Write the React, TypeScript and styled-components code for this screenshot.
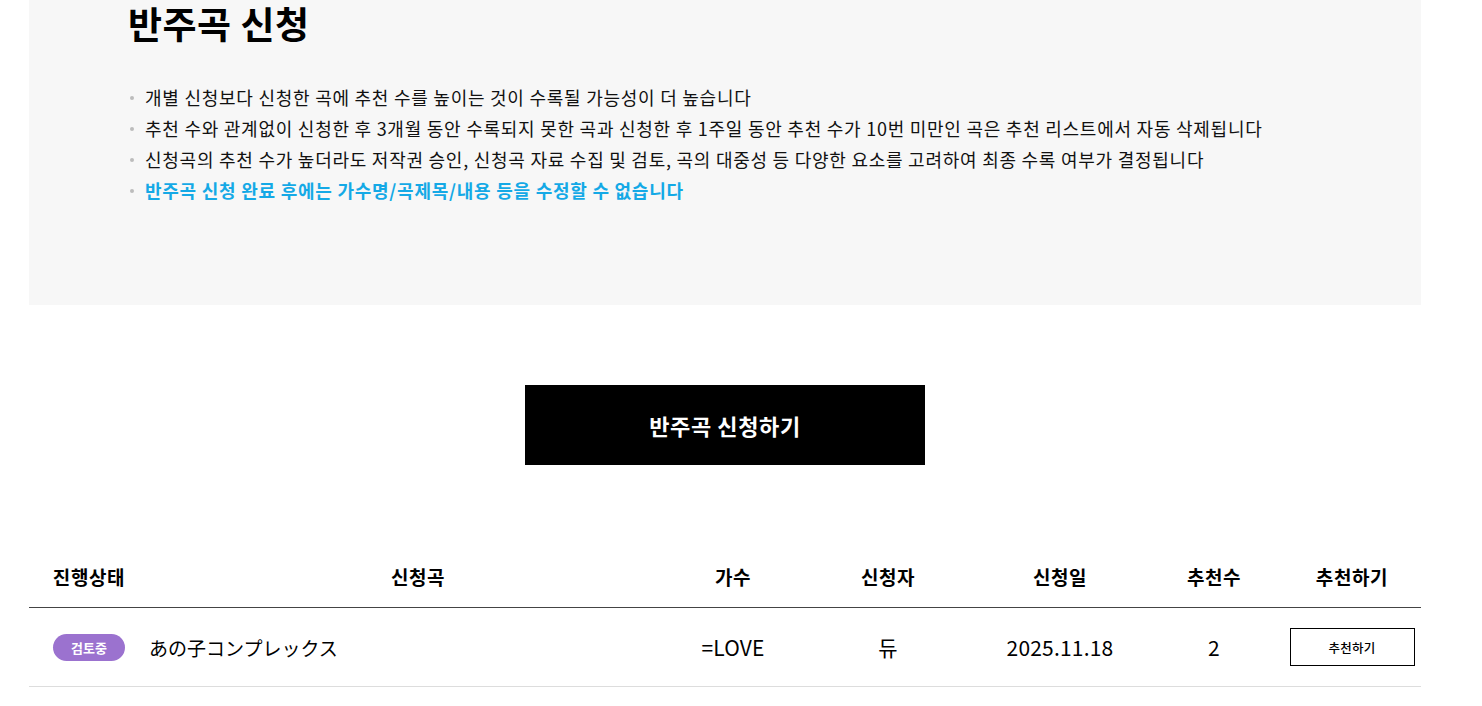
import styled, { createGlobalStyle } from "styled-components";

const GlobalStyle = createGlobalStyle`
  body {
    margin: 0;
    background: #fff;
    font-family: "Noto Sans CJK KR", "Noto Sans", sans-serif;
    color: #000;
  }
`;

const notices = [
  { text: "개별 신청보다 신청한 곡에 추천 수를 높이는 것이 수록될 가능성이 더 높습니다" },
  { text: "추천 수와 관계없이 신청한 후 3개월 동안 수록되지 못한 곡과 신청한 후 1주일 동안 추천 수가 10번 미만인 곡은 추천 리스트에서 자동 삭제됩니다" },
  { text: "신청곡의 추천 수가 높더라도 저작권 승인, 신청곡 자료 수집 및 검토, 곡의 대중성 등 다양한 요소를 고려하여 최종 수록 여부가 결정됩니다" },
  { text: "반주곡 신청 완료 후에는 가수명/곡제목/내용 등을 수정할 수 없습니다", highlight: true },
];

const requests = [
  { status: "검토중", title: "あの子コンプレックス", artist: "=LOVE", user: "듀", date: "2025.11.18", votes: 2 },
];

export default function App() {
  return (
    <>
      <GlobalStyle />
      <Page>
        <InfoPanel>
          <Title>반주곡 신청</Title>
          <NoticeList>
            {notices.map((n, i) => (
              <Notice key={i} $highlight={n.highlight}>{n.text}</Notice>
            ))}
          </NoticeList>
        </InfoPanel>

        <ButtonRow>
          <ApplyButton>반주곡 신청하기</ApplyButton>
        </ButtonRow>

        <Table>
          <HeadRow>
            <HeadCell>진행상태</HeadCell>
            <HeadCell $shift={22}>신청곡</HeadCell>
            <HeadCell>가수</HeadCell>
            <HeadCell>신청자</HeadCell>
            <HeadCell>신청일</HeadCell>
            <HeadCell>추천수</HeadCell>
            <HeadCell>추천하기</HeadCell>
          </HeadRow>
          {requests.map((r, i) => (
            <BodyRow key={i}>
              <Cell>
                <StatusBadge>{r.status}</StatusBadge>
              </Cell>
              <TitleCell>{r.title}</TitleCell>
              <Cell>{r.artist}</Cell>
              <Cell>{r.user}</Cell>
              <Cell>{r.date}</Cell>
              <Cell>{r.votes}</Cell>
              <Cell>
                <VoteButton>추천하기</VoteButton>
              </Cell>
            </BodyRow>
          ))}
        </Table>
      </Page>
    </>
  );
}

const Page = styled.div`
  width: 1392px;
  margin-left: 29px;
`;

const InfoPanel = styled.section`
  height: 305px;
  box-sizing: border-box;
  background: #f7f7f7;
  padding: 0 0 0 99px;
`;

const Title = styled.h1`
  margin: 0;
  font-size: 37px;
  line-height: 46px;
  font-weight: 700;
  letter-spacing: 0.5px;
`;

const NoticeList = styled.ul`
  list-style: none;
  margin: 36px 0 0;
  padding: 0;
`;

const Notice = styled.li<{ $highlight?: boolean }>`
  position: relative;
  padding-left: 17px;
  font-size: 18px;
  line-height: 31px;
  letter-spacing: 0.75px;
  color: ${({ $highlight }) => ($highlight ? "#14a9e6" : "#111")};
  font-weight: ${({ $highlight }) => ($highlight ? 700 : 400)};

  &::before {
    content: "";
    position: absolute;
    left: 2px;
    top: 14px;
    width: 4px;
    height: 4px;
    border-radius: 50%;
    background: #bcbcbc;
  }
`;

const ButtonRow = styled.div`
  display: flex;
  justify-content: center;
  padding-top: 80px;
`;

const ApplyButton = styled.button`
  width: 400px;
  height: 80px;
  border: none;
  background: #000;
  color: #fff;
  font-family: inherit;
  font-size: 22px;
  font-weight: 700;
  letter-spacing: 0.6px;
  cursor: pointer;
`;

const Table = styled.div`
  margin-top: 80px;
`;

const gridCols = "120px 516px 136px 174px 170px 138px 138px";

const HeadRow = styled.div`
  display: grid;
  grid-template-columns: ${gridCols};
  height: 62px;
  align-items: center;
  border-bottom: 1px solid #444;
`;

const HeadCell = styled.div<{ $shift?: number }>`
  text-align: center;
  font-size: 19px;
  font-weight: 700;
  letter-spacing: 0.6px;
  padding-left: ${({ $shift }) => $shift ?? 0}px;
`;

const BodyRow = styled.div`
  display: grid;
  grid-template-columns: ${gridCols};
  height: 78px;
  align-items: center;
  border-bottom: 1px solid #ddd;
`;

const Cell = styled.div`
  display: flex;
  justify-content: center;
  align-items: center;
  font-size: 21px;
  letter-spacing: 0.2px;
`;

const TitleCell = styled.div`
  text-align: left;
  font-size: 19px;
  letter-spacing: 0;
  font-family: "Noto Sans CJK JP", "Noto Sans CJK KR", sans-serif;
`;

const StatusBadge = styled.span`
  display: inline-flex;
  align-items: center;
  justify-content: center;
  width: 72px;
  height: 27px;
  border-radius: 14px;
  background: #9b72cf;
  color: #fff;
  font-size: 13px;
  font-weight: 700;
  letter-spacing: 0;
`;

const VoteButton = styled.button`
  width: 125px;
  height: 38px;
  border: 1px solid #000;
  background: #fff;
  font-family: inherit;
  font-size: 12.5px;
  font-weight: 500;
  letter-spacing: 0.3px;
  color: #000;
  cursor: pointer;
`;
